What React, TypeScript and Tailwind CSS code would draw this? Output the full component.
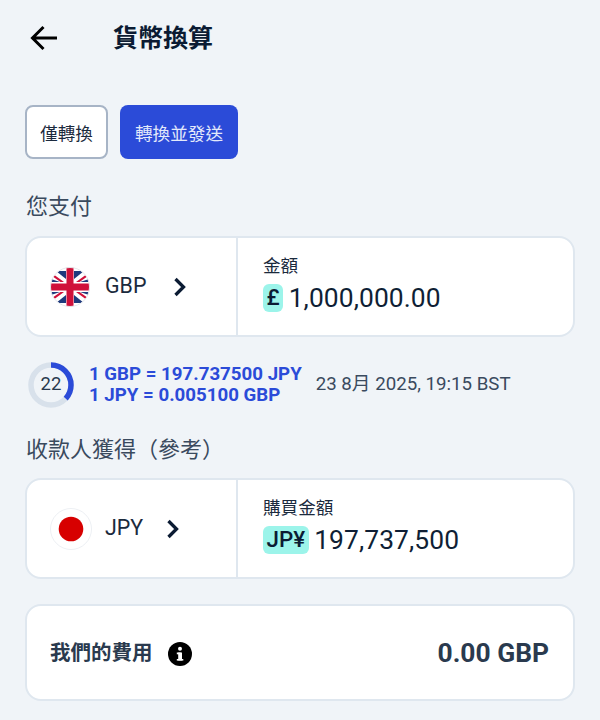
import React from "react";

const FONT = "font-['Roboto','Noto_Sans_CJK_TC',sans-serif]";

function UkFlag() {
  return (
    <svg width="40" height="40" viewBox="0 0 40 40" className="shrink-0">
      <defs>
        <clipPath id="uk"><circle cx="20" cy="20" r="19.5" /></clipPath>
      </defs>
      <g clipPath="url(#uk)">
        <rect width="40" height="40" fill="#fff" />
        <path d="M6 4 L16 12 V4 Z M34 4 L24 12 V4 Z M1 12 L10 15 H1 Z M39 12 L30 15 H39 Z M1 28 L10 25 H1 Z M39 28 L30 25 H39 Z M6 36 L16 28 V36 Z M34 36 L24 28 V36 Z" fill="#1f3a7d" />
        <path d="M3 7 L14 15 H10.5 L2 9 Z M37 7 L26 15 H29.5 L38 9 Z M3 33 L14 25 H10.5 L2 31 Z M37 33 L26 25 H29.5 L38 31 Z" fill="#d0103a" />
        <rect x="16.5" y="0" width="7" height="40" fill="#d0103a" />
        <rect x="0" y="16.5" width="40" height="7" fill="#d0103a" />
      </g>
      <circle cx="20" cy="20" r="19.5" fill="none" stroke="#e5e7eb" strokeWidth="1" />
    </svg>
  );
}

function JpFlag() {
  return (
    <svg width="42" height="42" viewBox="0 0 42 42" className="shrink-0">
      <circle cx="21" cy="21" r="20.5" fill="#fff" stroke="#edf0f4" strokeWidth="1" />
      <circle cx="21" cy="21" r="12.3" fill="#d70000" />
    </svg>
  );
}

function Chevron() {
  return (
    <svg width="14" height="20" viewBox="0 0 14 20" fill="none" className="shrink-0">
      <path d="M2.5 2 L10.5 10 L2.5 18" stroke="#0b1b33" strokeWidth="3.3" />
    </svg>
  );
}

function CurrencyCard(props: {
  flag: React.ReactNode;
  code: string;
  chevronGap: string;
  label: string;
  symbol: string;
  amount: string;
  codeGap: string;
}) {
  return (
    <div className="flex h-[101px] rounded-[16px] border-2 border-[#dfe7ef] bg-white">
      <div className="flex w-[211px] items-center border-r-2 border-[#dfe7ef] pl-[23px]">
        {props.flag}
        <span className={`text-[21.4px] text-[#1b2a3d] ${props.codeGap}`}>{props.code}</span>
        <span className={`flex ${props.chevronGap}`}><Chevron /></span>
      </div>
      <div className="flex flex-col justify-center pl-[25px] pb-[6px]">
        <span className="text-[17.6px] leading-[24px] text-[#1b2a3d]">{props.label}</span>
        <div className="mt-[4px] flex items-center">
          <span className="flex h-[28px] items-center rounded-[6px] bg-[#9cf4ea] px-[3.5px] text-[22.4px] font-medium text-[#0b1b33]">{props.symbol}</span>
          <span className="ml-[5.5px] text-[26.4px] leading-[32px] tracking-[0.1px] text-[#0f1f35]">{props.amount}</span>
        </div>
      </div>
    </div>
  );
}

export default function App() {
  return (
    <div className={`${FONT} h-[720px] w-[600px] overflow-hidden bg-[#f0f4f8] px-[25px]`}>
      <header className="flex h-[75px] items-center">
        <svg width="28" height="28" viewBox="0 0 28 28" fill="none" className="ml-[5px] shrink-0">
          <path d="M27 14 H3 M13.5 3 L2.5 14 L13.5 25" stroke="#000" strokeWidth="3" />
        </svg>
        <h1 className="ml-[55px] pt-[3px] text-[25px] font-bold text-[#0b1b33]">貨幣換算</h1>
      </header>

      <div className="mt-[30px] flex gap-[12px]">
        <div className="flex h-[54px] w-[83px] items-center justify-center rounded-[8px] border-2 border-[#a7b4c6] bg-white pt-[5px] text-[17.5px] text-[#1b2a3d]">僅轉換</div>
        <div className="flex h-[54px] w-[118px] items-center justify-center rounded-[8px] bg-[#2b4bd8] pt-[5px] text-[17.6px] text-[#e3e9fb]">轉換並發送</div>
      </div>

      <div className="mt-[32px] pl-[1px] text-[22px] leading-[32px] text-[#3a4a5e]">您支付</div>
      <div className="mt-[13px]">
        <CurrencyCard
          flag={<UkFlag />}
          code="GBP"
          codeGap="ml-[15px]"
          chevronGap="ml-[27px]"
          label="金額"
          symbol="£"
          amount="1,000,000.00"
        />
      </div>

      <div className="mt-[23px] flex h-[50px] items-center">
        <div className="relative ml-[3px] h-[46px] w-[46px] shrink-0">
          <svg width="46" height="46" viewBox="0 0 46 46" fill="none">
            <circle cx="23" cy="23" r="20" stroke="#d8e1eb" strokeWidth="5.5" />
            <circle cx="23" cy="23" r="20" stroke="#2b4bd8" strokeWidth="5.5" strokeDasharray="46 126" transform="rotate(-90 23 23)" />
          </svg>
          <span className="absolute inset-0 flex items-center justify-center text-[18.5px] text-[#2a3a4e]">22</span>
        </div>
        <div className="ml-[15px] text-[18.7px] leading-[21px] font-bold text-[#2b4bd8]">
          <div>1 GBP = 197.737500 JPY</div>
          <div>1 JPY = 0.005100 GBP</div>
        </div>
        <div className="ml-[14px] pb-[2px] text-[18.7px] text-[#3a4a5e]">23 8月 2025, 19:15 BST</div>
      </div>

      <div className="mt-[24px] pl-[1px] text-[22px] leading-[32px] text-[#3a4a5e]">收款人獲得（參考）</div>
      <div className="mt-[12px]">
        <CurrencyCard
          flag={<JpFlag />}
          code="JPY"
          codeGap="ml-[13px]"
          chevronGap="ml-[23px]"
          label="購買金額"
          symbol="JP¥"
          amount="197,737,500"
        />
      </div>

      <div className="mt-[25px] flex h-[97px] items-center justify-between rounded-[16px] border-2 border-[#dfe7ef] bg-white px-[24px] pt-[2px]">
        <div className="flex items-center">
          <span className="-ml-[1px] text-[20.5px] font-bold text-[#2a3a4e]">我們的費用</span>
          <svg width="24" height="24" viewBox="0 0 24 24" className="ml-[15px]">
            <circle cx="12" cy="12" r="12" fill="#000" />
            <rect x="10.2" y="10.5" width="3.8" height="8" fill="#fff" />
            <rect x="8.8" y="10.5" width="4" height="1.8" fill="#fff" />
            <rect x="8.8" y="17" width="6.5" height="1.6" fill="#fff" />
            <circle cx="12" cy="6.8" r="2" fill="#fff" />
          </svg>
        </div>
        <span className="text-[26.4px] font-bold text-[#2a3a4e]">0.00 GBP</span>
      </div>
    </div>
  );
}
